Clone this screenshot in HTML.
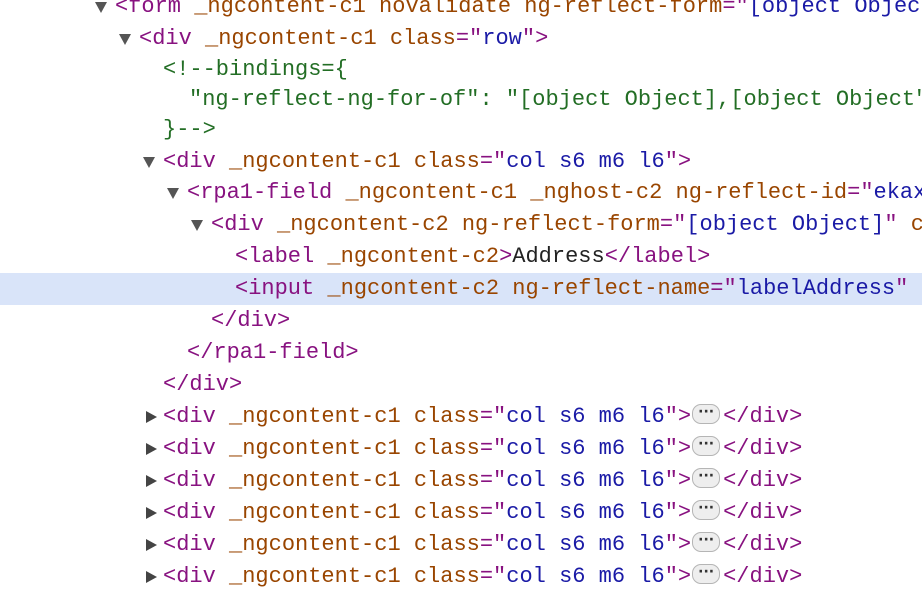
<!DOCTYPE html>
<html><head><style>
body{margin:0;width:922px;height:574px;overflow:hidden;background:#fff;position:relative;font-family:"Liberation Mono",monospace;font-size:22px;}
.r{position:absolute;left:0;width:922px;height:32px;line-height:32px;white-space:pre;}
.t{color:#881280}.a{color:#994500}.v{color:#1a1aa6}.c{color:#236e25}.x{color:#222}
.tri{position:absolute;top:11px;width:0;height:0;}
.dn{border-left:6px solid transparent;border-right:6px solid transparent;border-top:11px solid #555;}
.rt{border-top:6px solid transparent;border-bottom:6px solid transparent;border-left:11px solid #444;top:10px}
.dots{display:inline-block;width:26px;height:18px;border:1px solid #b5b5b5;border-radius:9px;background:#eee;vertical-align:middle;margin:0 3px 0 1px;position:relative;top:-2px;line-height:14px;text-align:center;font-size:14px;color:#333;font-family:"DejaVu Sans",sans-serif;font-weight:bold}
.hl{background:#d9e4f9}
</style></head><body>
<div class="r" style="top:-9px"><span class="tri dn" style="left:95px"></span><span style="position:absolute;left:115px"><span class="t">&lt;form </span><span class="a">_ngcontent-c1 novalidate ng-reflect-form</span><span class="t">="</span><span class="v">[object Object</span></span></div>
<div class="r" style="top:23px"><span class="tri dn" style="left:119px"></span><span style="position:absolute;left:139px"><span class="t">&lt;div </span><span class="a">_ngcontent-c1 class</span><span class="t">="</span><span class="v">row</span><span class="t">"&gt;</span></span></div>
<div class="r" style="top:54px"><span style="position:absolute;left:163px" class="c">&lt;!--bindings={</span></div>
<div class="r" style="top:84px"><span style="position:absolute;left:189px" class="c">"ng-reflect-ng-for-of": "[object Object],[object Object"</span></div>
<div class="r" style="top:114px"><span style="position:absolute;left:163px" class="c">}--&gt;</span></div>
<div class="r" style="top:146px"><span class="tri dn" style="left:143px"></span><span style="position:absolute;left:163px"><span class="t">&lt;div </span><span class="a">_ngcontent-c1 class</span><span class="t">="</span><span class="v">col s6 m6 l6</span><span class="t">"&gt;</span></span></div>
<div class="r" style="top:177px"><span class="tri dn" style="left:167px"></span><span style="position:absolute;left:187px"><span class="t">&lt;rpa1-field </span><span class="a">_ngcontent-c1 _nghost-c2 ng-reflect-id</span><span class="t">="</span><span class="v">ekax</span></span></div>
<div class="r" style="top:209px"><span class="tri dn" style="left:191px"></span><span style="position:absolute;left:211px"><span class="t">&lt;div </span><span class="a">_ngcontent-c2 ng-reflect-form</span><span class="t">="</span><span class="v">[object Object]</span><span class="t">" </span><span class="a">c</span></span></div>
<div class="r" style="top:241px"><span style="position:absolute;left:235px"><span class="t">&lt;label </span><span class="a">_ngcontent-c2</span><span class="t">&gt;</span><span class="x">Address</span><span class="t">&lt;/label&gt;</span></span></div>
<div class="r hl" style="top:273px"><span style="position:absolute;left:235px"><span class="t">&lt;input </span><span class="a">_ngcontent-c2 ng-reflect-name</span><span class="t">="</span><span class="v">labelAddress</span><span class="t">"</span></span></div>
<div class="r" style="top:305px"><span style="position:absolute;left:211px" class="t">&lt;/div&gt;</span></div>
<div class="r" style="top:337px"><span style="position:absolute;left:187px" class="t">&lt;/rpa1-field&gt;</span></div>
<div class="r" style="top:369px"><span style="position:absolute;left:163px" class="t">&lt;/div&gt;</span></div>
<div class="r" style="top:401px"><span class="tri rt" style="left:146px"></span><span style="position:absolute;left:163px"><span class="t">&lt;div </span><span class="a">_ngcontent-c1 class</span><span class="t">="</span><span class="v">col s6 m6 l6</span><span class="t">"&gt;</span><span class="dots">···</span><span class="t">&lt;/div&gt;</span></span></div>
<div class="r" style="top:433px"><span class="tri rt" style="left:146px"></span><span style="position:absolute;left:163px"><span class="t">&lt;div </span><span class="a">_ngcontent-c1 class</span><span class="t">="</span><span class="v">col s6 m6 l6</span><span class="t">"&gt;</span><span class="dots">···</span><span class="t">&lt;/div&gt;</span></span></div>
<div class="r" style="top:465px"><span class="tri rt" style="left:146px"></span><span style="position:absolute;left:163px"><span class="t">&lt;div </span><span class="a">_ngcontent-c1 class</span><span class="t">="</span><span class="v">col s6 m6 l6</span><span class="t">"&gt;</span><span class="dots">···</span><span class="t">&lt;/div&gt;</span></span></div>
<div class="r" style="top:497px"><span class="tri rt" style="left:146px"></span><span style="position:absolute;left:163px"><span class="t">&lt;div </span><span class="a">_ngcontent-c1 class</span><span class="t">="</span><span class="v">col s6 m6 l6</span><span class="t">"&gt;</span><span class="dots">···</span><span class="t">&lt;/div&gt;</span></span></div>
<div class="r" style="top:529px"><span class="tri rt" style="left:146px"></span><span style="position:absolute;left:163px"><span class="t">&lt;div </span><span class="a">_ngcontent-c1 class</span><span class="t">="</span><span class="v">col s6 m6 l6</span><span class="t">"&gt;</span><span class="dots">···</span><span class="t">&lt;/div&gt;</span></span></div>
<div class="r" style="top:561px"><span class="tri rt" style="left:146px"></span><span style="position:absolute;left:163px"><span class="t">&lt;div </span><span class="a">_ngcontent-c1 class</span><span class="t">="</span><span class="v">col s6 m6 l6</span><span class="t">"&gt;</span><span class="dots">···</span><span class="t">&lt;/div&gt;</span></span></div>
</body></html>
